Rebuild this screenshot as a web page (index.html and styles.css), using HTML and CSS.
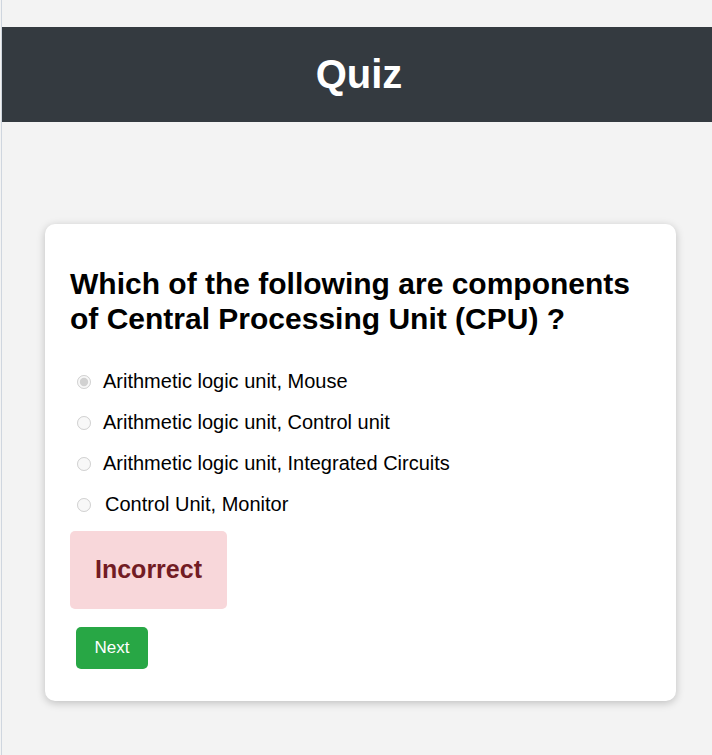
FILE: index.html
```html
<!DOCTYPE html>
<html>
<head>
<meta charset="utf-8">
<link rel="stylesheet" href="styles.css">
</head>
<body>
<div class="page">
  <header class="topbar"><h1>Quiz</h1></header>
  <main class="main">
    <div class="card">
      <h2 class="question">Which of the following are components of Central Processing Unit (CPU) ?</h2>
      <div class="options">
        <label class="option"><input type="radio" name="q" checked disabled><span>Arithmetic logic unit, Mouse</span></label>
        <label class="option"><input type="radio" name="q" disabled><span>Arithmetic logic unit, Control unit</span></label>
        <label class="option"><input type="radio" name="q" disabled><span>Arithmetic logic unit, Integrated Circuits</span></label>
        <label class="option"><input type="radio" name="q" disabled><span class="last">Control Unit, Monitor</span></label>
      </div>
      <div class="result">Incorrect</div>
      <button class="next">Next</button>
    </div>
  </main>
</div>
</body>
</html>
```
FILE: styles.css
```css
html, body {
  margin: 0;
  padding: 0;
  background: #f3f3f3;
  font-family: "Liberation Sans", Arial, sans-serif;
}
.page {
  margin-left: 1px;
  border-left: 1px solid #cfd6df;
  min-height: 755px;
  padding-top: 27px;
  box-sizing: border-box;
}
.topbar {
  background: #343a40;
  height: 95px;
  display: flex;
  align-items: center;
  justify-content: center;
}
.topbar h1 {
  margin: 0;
  color: #fff;
  font-size: 40px;
  font-weight: bold;
  padding-left: 4px;
}
.main {
  padding: 102px 36px 0 43px;
}
.card {
  background: #fff;
  border-radius: 10px;
  box-shadow: 0 2px 8px rgba(0,0,0,0.22);
  padding: 25px 25px 32px 25px;
}
.question {
  margin: 17px 0 25px 0;
  font-size: 30px;
  line-height: 35px;
  font-weight: bold;
  color: #000;
}
.options {
  display: flex;
  flex-direction: column;
}
.option {
  display: flex;
  align-items: center;
  height: 41px;
  font-size: 20px;
  color: #000;
}
.option input {
  margin: 0 12px 0 7px;
  width: 14px;
  height: 14px;
}
.option .last {
  margin-left: 2px;
}
.result {
  display: inline-block;
  margin-top: 6px;
  background: #f8d7da;
  color: #721c24;
  font-size: 25px;
  font-weight: bold;
  padding: 24px 25px 25px;
  border-radius: 5px;
}
.next {
  display: block;
  margin: 18px 0 0 6px;
  background: #28a745;
  color: #fff;
  border: none;
  border-radius: 5px;
  font-family: "Liberation Sans", Arial, sans-serif;
  font-size: 17px;
  width: 72px;
  height: 42px;
}
```
